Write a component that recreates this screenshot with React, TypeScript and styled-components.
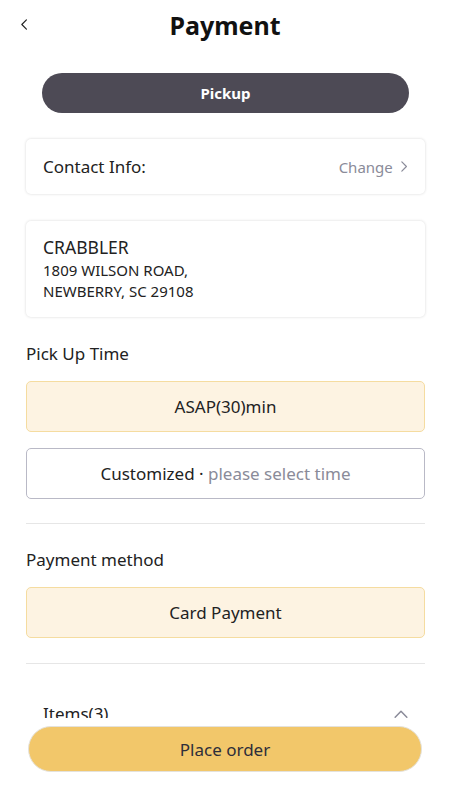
import React from "react";
import styled, { createGlobalStyle } from "styled-components";

const Global = createGlobalStyle`
  html, body { margin: 0; padding: 0; background: #fff; }
  body { font-family: "Noto Sans", "Open Sans", sans-serif; color: #222; }
  * { box-sizing: border-box; }
`;

const Page = styled.div`
  width: 450px;
  height: 800px;
  position: relative;
  overflow: hidden;
  background: #fff;
`;

const Header = styled.header`
  height: 50px;
  display: flex;
  align-items: center;
  justify-content: center;
  position: relative;
`;

const Back = styled.button`
  position: absolute;
  left: 14px;
  top: 14px;
  width: 20px;
  height: 20px;
  border: none;
  background: none;
  padding: 0;
  display: flex;
  align-items: center;
  justify-content: center;
`;

const Title = styled.h1`
  margin: 0;
  font-size: 25px;
  font-weight: 700;
  color: #111;
  line-height: 1;
`;

const Content = styled.main`
  padding: 23px 25px 0 26px;
  display: flex;
  flex-direction: column;
`;

const ModePill = styled.div`
  margin: 0 16px 0 16px;
  height: 40px;
  border-radius: 20px;
  background: #4d4a55;
  color: #fff;
  font-weight: 700;
  font-size: 15px;
  display: flex;
  align-items: center;
  justify-content: center;
`;

const Card = styled.div<{ $mt: number }>`
  margin-top: ${(p) => p.$mt}px;
  background: #fff;
  border-radius: 5px;
  box-shadow: 0 0 3px rgba(0, 0, 0, 0.16);
  padding: 0 17px;
`;

const ContactRow = styled(Card)`
  height: 55px;
  display: flex;
  align-items: center;
  justify-content: space-between;
  font-size: 17px;
`;

const ChangeLink = styled.span`
  color: #8a8b99;
  font-size: 15px;
  display: flex;
  align-items: center;
  gap: 7px;
`;

const AddressCard = styled(Card)`
  height: 96px;
  padding-top: 14px;
  display: flex;
  flex-direction: column;
`;

const StoreName = styled.div`
  font-size: 17.5px;
  line-height: 25px;
  color: #222;
`;

const AddressLine = styled.div`
  font-size: 15px;
  line-height: 21px;
  color: #222;
`;

const SectionLabel = styled.div<{ $mt: number }>`
  margin-top: ${(p) => p.$mt}px;
  font-size: 17px;
  line-height: 24px;
  color: #222;
`;

const Option = styled.div<{ $active?: boolean; $mt: number }>`
  margin-top: ${(p) => p.$mt}px;
  height: 51px;
  border-radius: 5px;
  border: 1px solid ${(p) => (p.$active ? "#f5dca0" : "#b9b9c6")};
  background: ${(p) => (p.$active ? "#fdf3e2" : "#fff")};
  display: flex;
  align-items: center;
  justify-content: center;
  font-size: 17px;
  color: #222;
`;

const Muted = styled.span`
  color: #8a8b99;
`;

const Divider = styled.hr<{ $mt: number }>`
  margin: ${(p) => p.$mt}px 0 0 0;
  border: none;
  border-top: 1px solid #e6e6e6;
  height: 0;
`;

const ItemsRow = styled.div`
  margin-top: 38px;
  padding: 0 17px;
  display: flex;
  justify-content: space-between;
  align-items: center;
  font-size: 17px;
  line-height: 24px;
`;

const BottomBar = styled.div`
  position: absolute;
  left: 0;
  right: 0;
  bottom: 0;
  top: 718px;
  background: #fff;
  padding: 8px 28px 0 28px;
`;

const PlaceButton = styled.button`
  width: 100%;
  height: 46px;
  border-radius: 23px;
  border: 1px solid #e4e2dc;
  background: #f2c76a;
  color: #2e2e3a;
  font-family: inherit;
  font-size: 17px;
  display: flex;
  align-items: center;
  justify-content: center;
`;

const Chevron = ({ dir, color, size }: { dir: "left" | "right" | "up"; color: string; size: number }) => {
  const d =
    dir === "left" ? "M7 1 L2 6 L7 11" : dir === "right" ? "M2 1 L7 6 L2 11" : "M1 7 L6 2 L11 7";
  const w = dir === "up" ? 12 : 9;
  const h = dir === "up" ? 9 : 12;
  return (
    <svg width={(w * size) / 12} height={(h * size) / 12} viewBox={`0 0 ${w} ${h}`} fill="none">
      <path d={d} stroke={color} strokeWidth={1.3} strokeLinecap="round" strokeLinejoin="round" />
    </svg>
  );
};

export default function App() {
  return (
    <Page>
      <Global />
      <Header>
        <Back aria-label="back">
          <Chevron dir="left" color="#222" size={11} />
        </Back>
        <Title>Payment</Title>
      </Header>
      <Content>
        <ModePill>Pickup</ModePill>
        <ContactRow $mt={26}>
          <span>Contact Info:</span>
          <ChangeLink>
            Change <Chevron dir="right" color="#8a8b99" size={11} />
          </ChangeLink>
        </ContactRow>
        <AddressCard $mt={27}>
          <StoreName>CRABBLER</StoreName>
          <AddressLine>1809 WILSON ROAD,</AddressLine>
          <AddressLine>NEWBERRY, SC 29108</AddressLine>
        </AddressCard>
        <SectionLabel $mt={25}>Pick Up Time</SectionLabel>
        <Option $active $mt={15}>ASAP(30)min</Option>
        <Option $mt={16}>
          Customized&nbsp;·&nbsp;<Muted>please select time</Muted>
        </Option>
        <Divider $mt={24} />
        <SectionLabel $mt={24}>Payment method</SectionLabel>
        <Option $active $mt={15}>Card Payment</Option>
        <Divider $mt={25} />
        <ItemsRow>
          <span>Items(3)</span>
          <Chevron dir="up" color="#8a8b99" size={14} />
        </ItemsRow>
      </Content>
      <BottomBar>
        <PlaceButton>Place order</PlaceButton>
      </BottomBar>
    </Page>
  );
}
